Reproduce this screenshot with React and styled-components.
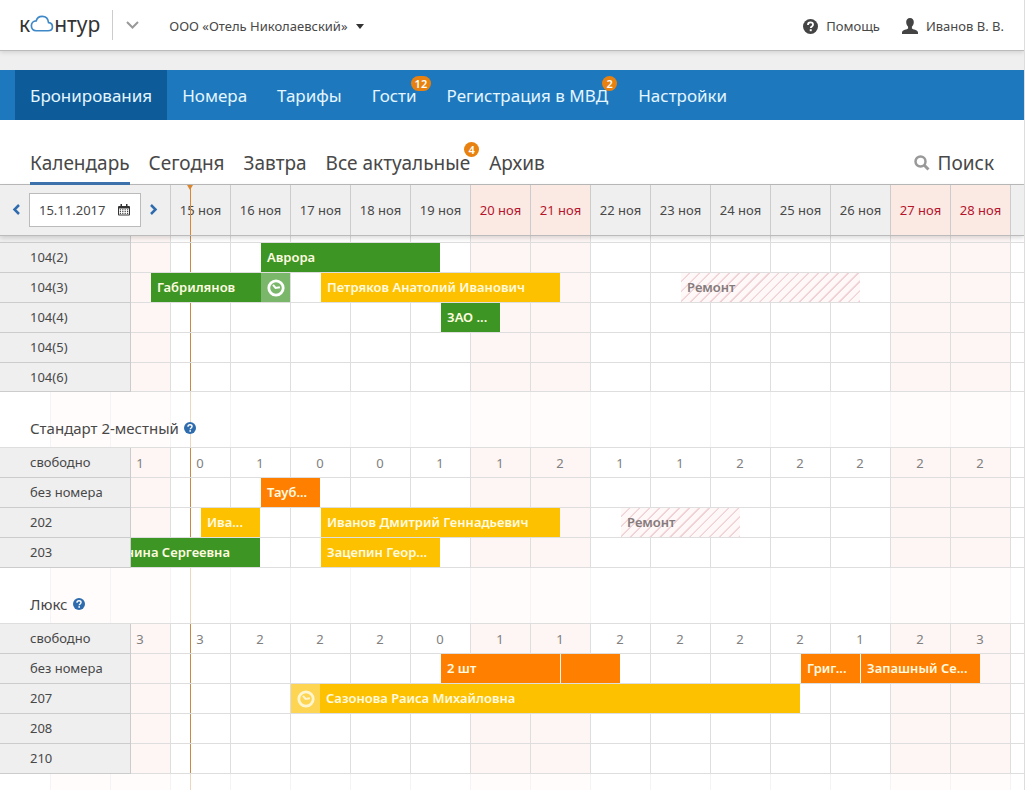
import styled, { createGlobalStyle, css } from 'styled-components';

const GlobalStyle = createGlobalStyle`
  * {
    box-sizing: border-box;
  }
  body {
    margin: 0;
    background: #fff;
    color: #484848;
    font-family: 'Noto Sans', 'Open Sans', sans-serif;
    font-size: 13px;
  }
  button, input {
    font: inherit;
    color: inherit;
  }
  button {
    padding: 0;
    border: 0;
    background: none;
    cursor: pointer;
  }
  a {
    color: inherit;
    text-decoration: none;
  }
`;

const Page = styled.div`
  display: flex;
  flex-direction: column;
  min-height: 100vh;
  border-right: 1px solid #ddd;
  overflow: hidden;
`;

const Header = styled.header`
  position: relative;
  display: flex;
  align-items: center;
  height: 51px;
  padding: 0 20px 0 19px;
  background: #fff;
  border-bottom: 1px solid #bbb;
  box-shadow: 0 1px 5px rgba(0, 0, 0, 0.15);
`;

const Logo = styled.a`
  display: flex;
  align-items: center;
  padding-bottom: 2px;
  color: #333;
  font-size: 21px;
  line-height: 30px;
`;

const Switcher = styled.button`
  display: flex;
  align-items: center;
  height: 30px;
  margin-left: 12px;
  padding: 0 0 0 13px;
  border-left: 1px solid #ccc;
`;

const Company = styled.button`
  display: flex;
  align-items: center;
  gap: 8px;
  margin: 2px auto 0 30px;
`;

const UserLink = styled.a`
  display: flex;
  align-items: center;
  gap: 8px;
  margin: 2px 0 0 22px;
`;

const Strip = styled.div`
  height: 19px;
  background: #efefef;
`;

const MainNav = styled.nav`
  display: flex;
  height: 50px;
  padding-left: 15px;
  background: #1e78be;
  color: #e4f6ff;
  font-size: 17px;
`;

const NavItem = styled.a`
  padding: 0 15px;
  line-height: 52px;
  white-space: nowrap;
  background: ${({ $active }) => ($active ? '#0d5c99' : 'none')};
`;

const Counted = styled.span`
  position: relative;
`;

const Badge = styled.span`
  position: absolute;
  left: calc(100% - 6px);
  top: ${({ $top }) => $top}px;
  min-width: 15px;
  height: 15px;
  padding: 0 4px;
  border-radius: 8px;
  background: #e8810f;
  color: #fff;
  font-size: 11px;
  font-weight: 600;
  line-height: 15px;
  text-align: center;
`;

const Tabs = styled.nav`
  display: flex;
  align-items: flex-end;
  gap: 19px;
  height: 65px;
  padding: 0 30px;
  border-bottom: 1px solid #bbb;
  font-size: 19px;
`;

const Tab = styled.a`
  height: 42px;
  margin-bottom: -1px;
  line-height: 40px;
  white-space: nowrap;
  border-bottom: 3px solid ${({ $active }) => ($active ? '#3d73ae' : 'transparent')};
`;

const SearchButton = styled.button`
  display: flex;
  align-items: center;
  gap: 8px;
  height: 42px;
  margin-left: auto;
`;

const DateBar = styled.div`
  position: relative;
  z-index: 1;
  display: flex;
  height: 51px;
  background: #efefef;
  border-bottom: 1px solid #bbb;
  box-shadow: 0 2px 5px rgba(0, 0, 0, 0.15);
`;

const DatePicker = styled.div`
  flex: none;
  display: flex;
  align-items: center;
  gap: 8px;
  width: 171px;
  padding-left: 12px;
  border-right: 1px solid #ccc;
`;

const DateField = styled.label`
  display: flex;
  align-items: center;
  width: 112px;
  height: 34px;
  padding: 0 10px 0 9px;
  background: #fff;
  border: 1px solid #bbb;
`;

const DateInput = styled.input`
  flex: 1;
  min-width: 0;
  padding: 0;
  border: 0;
  outline: 0;
`;

const DayHead = styled.div`
  position: relative;
  flex: none;
  width: 60px;
  line-height: 50px;
  text-align: center;
  white-space: nowrap;
  border-right: 1px solid #ccc;
  ${({ $weekend }) => $weekend && css`
    background: #fbe9e4;
    color: #b5152b;
  `}
`;

const TodayMark = styled.span`
  position: absolute;
  top: 0;
  bottom: 0;
  left: 19px;
  width: 1px;
  background: #d9862f;
  &::before {
    content: '';
    position: absolute;
    left: -3px;
    border: solid transparent;
    border-width: 5px 3px 0;
    border-top-color: #d9862f;
  }
`;

/* today line, day borders and weekend tint, shared by all the rows */
const Schedule = styled.main`
  flex: 1;
  display: flex;
  flex-direction: column;
  background:
    linear-gradient(#c68a45, #c68a45) 190px 0 / 1px 100% no-repeat,
    repeating-linear-gradient(90deg, #dedede 0 1px, transparent 1px 60px) 50px 0 / 60px 100%,
    linear-gradient(90deg, #fef6f4 120px, transparent 120px) 51px 0 / 420px 100%,
    #fff;
`;

const GroupTitle = styled.h2`
  display: flex;
  align-items: center;
  gap: 5px;
  height: 56px;
  margin: 0;
  padding: 16px 0 0 30px;
  border-bottom: 1px solid #dedede;
  background: rgba(255, 255, 255, 0.65);
  font-size: 15px;
  font-weight: 400;
`;

const Rest = styled.div`
  flex: 1;
  min-height: 16px;
  background: rgba(255, 255, 255, 0.65);
`;

const Row = styled.div`
  display: flex;
  height: ${({ $height = 30 }) => $height}px;
`;

const RoomName = styled.div`
  flex: none;
  width: 131px;
  padding-left: 30px;
  line-height: 29px;
  background: #efefef;
  border-right: 1px solid #ccc;
  border-bottom: 1px solid #ccc;
`;

const Lane = styled.div`
  flex: 1;
  min-width: 0;
  display: grid;
  grid-template-columns: repeat(auto-fill, 10px);
  grid-template-rows: 100%;
  overflow: hidden;
  border-bottom: 1px solid #dedede;
`;

const FreeLane = styled.div`
  flex: 1;
  min-width: 0;
  display: flex;
  overflow: hidden;
  border-bottom: 1px solid #dedede;
  color: #808080;
`;

const FreeCount = styled.span`
  flex: none;
  width: 60px;
  padding-right: 2px;
  line-height: 30px;
  text-align: center;
  &:first-child {
    width: 40px;
    padding-right: 22px;
  }
`;

const fills = {
  green: '#3d9624',
  yellow: '#fdc100',
  orange: '#ff8000',
  repair: 'repeating-linear-gradient(135deg, #fff8f8 0 5px, #f0d2d6 6px 7px)',
};

const Booking = styled.button`
  grid-row: 1;
  grid-column: ${({ $from, $span }) => `${$from} / span ${$span}`};
  display: flex;
  align-items: center;
  justify-content: ${({ $cut }) => ($cut ? 'flex-end' : 'flex-start')};
  min-width: 0;
  margin-right: 1px;
  padding: ${({ $cut }) => ($cut ? '0 30px 0 0' : '0 0 0 6px')};
  overflow: hidden;
  line-height: 28px;
  white-space: nowrap;
  background: ${({ $kind }) => fills[$kind]};
  color: ${({ $kind }) => ($kind === 'repair' ? '#857b7b' : '#fffbe0')};
  font-weight: 600;
`;

const Guest = styled.span`
  padding-bottom: 1px;
`;

const ClockBox = styled.span`
  flex: none;
  display: flex;
  align-items: center;
  justify-content: center;
  width: 29px;
  height: 100%;
  background: rgba(255, 255, 255, 0.32);
  ${({ $end }) => ($end ? 'margin-left: auto;' : 'margin: 0 6px 0 -6px;')}
`;

const CloudIcon = () => (
  <svg width="24" height="18" viewBox="0 0 26 20" fill="none" stroke="#3e88c7" strokeWidth="1.9">
    <path d="M6.4 17.5h13.2c3 0 5-1.9 5-4.5 0-2.500-1.700-4.300-4.300-4.600C19.800 4.200 17 1.500 13.200 1.500c-3.600 0-5.900 2-6.700 5.100C3.500 6.700 1.200 9 1.200 12c0 3.200 2.200 5.500 5.200 5.500z" />
  </svg>
);

const ChevronIcon = ({ d, color, width, height, stroke }) => (
  <svg width={width} height={height} fill="none" stroke={color} strokeWidth={stroke}>
    <path d={d} />
  </svg>
);

const HelpIcon = ({ size, color }) => (
  <svg width={size} height={size} viewBox="0 0 16 16">
    <circle cx="8" cy="8" r="8" fill={color} />
    <path d="M5.300 6.300c0-1.700 1.100-2.600 2.700-2.600s2.700.9 2.700 2.300c0 2-2.400 1.900-2.400 3.700" fill="none" stroke="#fff" strokeWidth="1.900" />
    <rect x="7.200" y="10.900" width="2.100" height="2.100" fill="#fff" />
  </svg>
);

const UserIcon = () => (
  <svg width="16" height="16" viewBox="0 0 16 16" fill="#444">
    <path d="M8 0c2.500 0 3.800 1.700 3.800 4.100 0 2-.8 3.600-1.900 4.600v1.900c.7 1 5.900 1.200 6.100 3.800V16H0v-1.600c.2-2.600 5.400-2.800 6.100-3.800V8.700C5 7.700 4.200 6.100 4.200 4.100 4.200 1.700 5.500 0 8 0z" />
  </svg>
);

const SearchIcon = () => (
  <svg width="16" height="16" fill="none" stroke="#999" strokeWidth="2.500">
    <circle cx="6.500" cy="6.500" r="5" />
    <path d="M10.300 10.300l4.200 4.200" strokeWidth="3" />
  </svg>
);

const CalendarIcon = () => (
  <svg width="12" height="12" fill="#333">
    <path d="M1 2h10a1 1 0 0 1 1 1v7.500a1 1 0 0 1-1 1H1a1 1 0 0 1-1-1V3a1 1 0 0 1 1-1z" />
    <path d="M2.500 0h1.500v2.500h-1.500zM8 0h1.500v2.500h-1.500z" />
    <path d="M1 4.500h10v6H1z" fill="#fff" />
    <path d="M1.800 5.800h8.500M1.800 7.600h8.500M1.800 9.400h8.500" stroke="#333" strokeWidth="1" strokeDasharray="1.200 1.200" />
  </svg>
);

const ClockIcon = ({ color }) => (
  <svg width="18" height="18" fill="none" stroke={color}>
    <circle cx="9" cy="9" r="7.200" strokeWidth="2.800" />
    <path d="M6 5.800L8.600 9l4.300-.8" strokeWidth="2" />
  </svg>
);

const navItems = [
  { title: 'Бронирования', active: true },
  { title: 'Номера' },
  { title: 'Тарифы' },
  { title: 'Гости', count: 12 },
  { title: 'Регистрация в МВД', count: 2 },
  { title: 'Настройки' },
];

const tabs = [
  { title: 'Календарь', active: true },
  { title: 'Сегодня' },
  { title: 'Завтра' },
  { title: 'Все актуальные', count: 4 },
  { title: 'Архив' },
];

const days = Array.from({ length: 14 }, (_, i) => 15 + i);
const weekends = [20, 21, 27, 28];

// from and span are counted in sixths of a day
const groups = [
  {
    rows: [
      { name: '', height: 7 },
      { name: '104(2)', items: [{ kind: 'green', from: 14, span: 18, text: 'Аврора' }] },
      {
        name: '104(3)',
        items: [
          { kind: 'green', from: 3, span: 14, text: 'Габрилянов', clock: 'end' },
          { kind: 'yellow', from: 20, span: 24, text: 'Петряков Анатолий Иванович' },
          { kind: 'repair', from: 56, span: 18, text: 'Ремонт' },
        ],
      },
      { name: '104(4)', items: [{ kind: 'green', from: 32, span: 6, text: 'ЗАО ...' }] },
      { name: '104(5)' },
      { name: '104(6)', height: 29 },
    ],
  },
  {
    title: 'Стандарт 2-местный',
    free: [1, 0, 1, 0, 0, 1, 1, 2, 1, 1, 2, 2, 2, 2, 2],
    rows: [
      { name: 'без номера', items: [{ kind: 'orange', from: 14, span: 6, text: 'Тауб...' }] },
      {
        name: '202',
        items: [
          { kind: 'yellow', from: 8, span: 6, text: 'Ива...' },
          { kind: 'yellow', from: 20, span: 24, text: 'Иванов Дмитрий Геннадьевич' },
          { kind: 'repair', from: 50, span: 12, text: 'Ремонт' },
        ],
      },
      {
        name: '203',
        items: [
          { kind: 'green', from: 1, span: 13, text: 'нина Сергеевна', cut: true },
          { kind: 'yellow', from: 20, span: 12, text: 'Зацепин Геор...' },
        ],
      },
    ],
  },
  {
    title: 'Люкс',
    free: [3, 3, 2, 2, 2, 0, 1, 1, 2, 2, 2, 2, 1, 2, 3],
    rows: [
      {
        name: 'без номера',
        items: [
          { kind: 'orange', from: 32, span: 12, text: '2 шт' },
          { kind: 'orange', from: 44, span: 6, text: '' },
          { kind: 'orange', from: 68, span: 6, text: 'Григ...' },
          { kind: 'orange', from: 74, span: 12, text: 'Запашный Се...' },
        ],
      },
      { name: '207', items: [{ kind: 'yellow', from: 17, span: 51, text: 'Сазонова Раиса Михайловна', clock: 'start' }] },
      { name: '208' },
      { name: '210' },
    ],
  },
];

const BookingBar = ({ item }) => (
  <Booking type="button" $kind={item.kind} $from={item.from} $span={item.span} $cut={item.cut}>
    {item.clock === 'start' && <ClockBox><ClockIcon color="#fff6d0" /></ClockBox>}
    <Guest>{item.text}</Guest>
    {item.clock === 'end' && <ClockBox $end><ClockIcon color="#fff" /></ClockBox>}
  </Booking>
);

const RoomGroup = ({ group }) => (
  <section>
    {group.title && (
      <GroupTitle>
        {group.title}
        <HelpIcon size={12} color="#2f6cae" />
      </GroupTitle>
    )}
    {group.free && (
      <Row>
        <RoomName>свободно</RoomName>
        <FreeLane>
          {group.free.map((n, i) => <FreeCount key={i}>{n}</FreeCount>)}
        </FreeLane>
      </Row>
    )}
    {group.rows.map((row, i) => (
      <Row key={i} $height={row.height}>
        <RoomName>{row.name}</RoomName>
        <Lane>
          {row.items?.map((item) => <BookingBar key={item.from} item={item} />)}
        </Lane>
      </Row>
    ))}
  </section>
);

const App = () => {
  return (
    <>
      <GlobalStyle />
      <Page>
        <Header>
          <Logo href="#">к<CloudIcon />нтур</Logo>
          <Switcher type="button" aria-label="Сервисы">
            <ChevronIcon width={13} height={8} d="M1 1l5.500 5.500L12 1" color="#999" stroke={2} />
          </Switcher>
          <Company type="button">
            ООО «Отель Николаевский»
            <svg width="8" height="5" fill="#333"><path d="M0 0h8L4 5z" /></svg>
          </Company>
          <UserLink href="#"><HelpIcon size={15} color="#444" />Помощь</UserLink>
          <UserLink href="#"><UserIcon />Иванов В. В.</UserLink>
        </Header>
        <Strip />
        <MainNav>
          {navItems.map(({ title, active, count }) => (
            <NavItem key={title} href="#" $active={active}>
              <Counted>{title}{count && <Badge $top={-8}>{count}</Badge>}</Counted>
            </NavItem>
          ))}
        </MainNav>
        <Tabs>
          {tabs.map(({ title, active, count }) => (
            <Tab key={title} href="#" $active={active}>
              <Counted>{title}{count && <Badge $top={-8}>{count}</Badge>}</Counted>
            </Tab>
          ))}
          <SearchButton type="button"><SearchIcon />Поиск</SearchButton>
        </Tabs>
        <DateBar>
          <DatePicker>
            <button type="button" aria-label="Назад">
              <ChevronIcon width={9} height={11} d="M7 1L2.500 5.500 7 10" color="#2f6cae" stroke={2.5} />
            </button>
            <DateField>
              <DateInput defaultValue="15.11.2017" aria-label="Дата" />
              <CalendarIcon />
            </DateField>
            <button type="button" aria-label="Вперёд">
              <ChevronIcon width={9} height={11} d="M2 1l4.500 4.500L2 10" color="#2f6cae" stroke={2.5} />
            </button>
          </DatePicker>
          {days.map((day) => (
            <DayHead key={day} $weekend={weekends.includes(day)}>
              {day} ноя
              {day === 15 && <TodayMark />}
            </DayHead>
          ))}
        </DateBar>
        <Schedule>
          {groups.map((group, i) => <RoomGroup key={i} group={group} />)}
          <Rest />
        </Schedule>
      </Page>
    </>
  );
};

export default App;
